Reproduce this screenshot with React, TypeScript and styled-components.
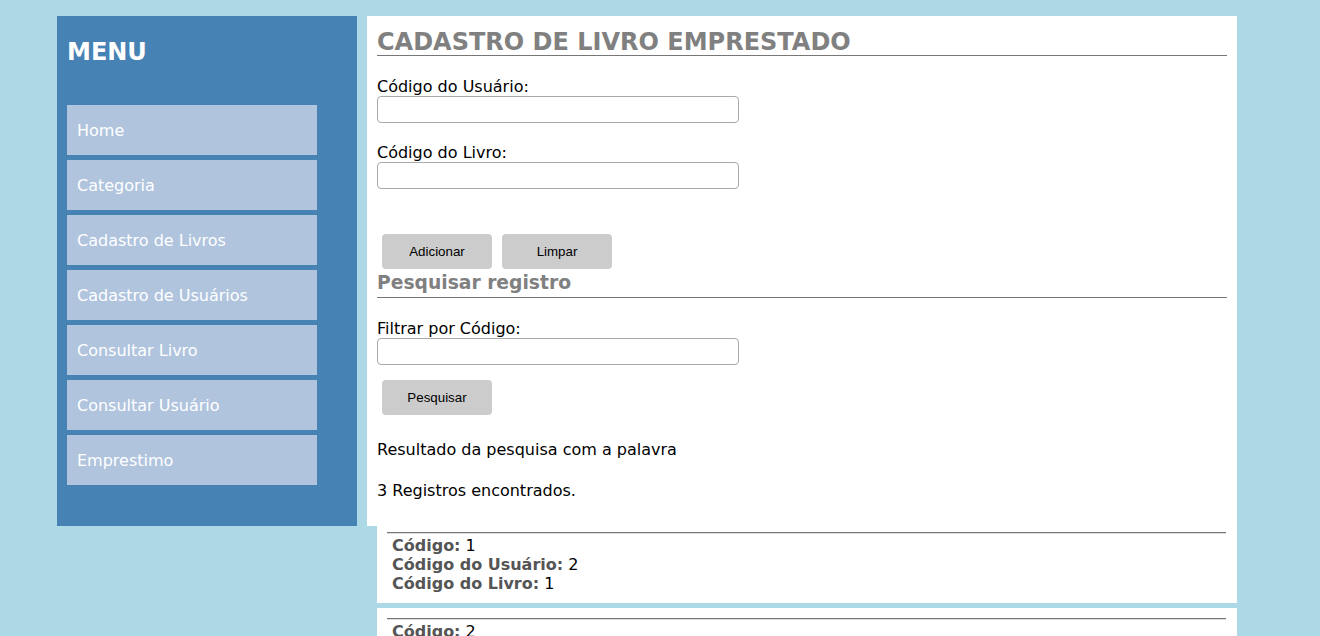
import React from "react";
import styled, { createGlobalStyle } from "styled-components";

const GlobalStyle = createGlobalStyle`
  html, body {
    margin: 0;
    padding: 0;
    background: #add8e6;
  }
  body {
    font-family: "DejaVu Sans", Verdana, sans-serif;
    font-size: 16px;
    color: #000;
  }
`;

const Page = styled.div`
  display: flex;
  align-items: flex-start;
  gap: 10px;
  padding: 16px 0 0 57px;
`;

const Sidebar = styled.nav`
  width: 300px;
  height: 510px;
  box-sizing: border-box;
  padding: 0 10px;
  background: #4682b4;
`;

const MenuTitle = styled.h2`
  margin: 22px 0 0;
  font-size: 24px;
  line-height: 28px;
  font-weight: bold;
  color: #fff;
`;

const MenuList = styled.ul`
  list-style: none;
  margin: 39px 0 0;
  padding: 0;
  display: flex;
  flex-direction: column;
  gap: 5px;
`;

const MenuItem = styled.li`
  width: 250px;
  height: 50px;
  box-sizing: border-box;
  padding: 1px 0 0 10px;
  display: flex;
  align-items: center;
  background: #b0c4de;
  color: #fff;
  font-size: 16px;
`;

const Column = styled.div`
  width: 870px;
  display: flex;
  flex-direction: column;
`;

const Panel = styled.main`
  height: 510px;
  box-sizing: border-box;
  padding: 0 10px;
  background: #fff;
`;

const Title = styled.h2`
  margin: 13px 0 0;
  font-size: 24px;
  line-height: 26px;
  font-weight: bold;
  color: #808080;
  border-bottom: 1px solid #777;
`;

const SubTitle = styled.h3`
  margin: 3px 0 0;
  padding-bottom: 3px;
  font-size: 18.72px;
  line-height: 22px;
  font-weight: bold;
  color: #808080;
  border-bottom: 1px solid #777;
`;

const Field = styled.div<{ $top: number }>`
  margin-top: ${(p) => p.$top}px;
`;

const Label = styled.label`
  display: block;
  line-height: 19px;
  height: 19px;
`;

const TextInput = styled.input`
  display: block;
  width: 362px;
  height: 27px;
  box-sizing: border-box;
  margin: 0;
  padding: 2px 5px;
  border: 1px solid #a9a9a9;
  border-radius: 4px;
  font-size: 14px;
  background: #fff;

  &:focus {
    outline: none;
  }
`;

const ButtonRow = styled.div<{ $top: number }>`
  display: flex;
  gap: 10px;
  padding-left: 5px;
  margin-top: ${(p) => p.$top}px;
`;

const Button = styled.button`
  width: 110px;
  height: 35px;
  margin: 0;
  border: none;
  border-radius: 4px;
  background: #ccc;
  color: #000;
  font-family: "Liberation Sans", Arial, sans-serif;
  font-size: 13.33px;
`;

const Text = styled.p<{ $top: number }>`
  margin: ${(p) => p.$top}px 0 0;
  line-height: 19px;
`;

const Results = styled.div`
  margin: -4px 0 0 10px;
  display: flex;
  flex-direction: column;
  gap: 5px;
`;

const Card = styled.div`
  background: #fff;
  padding: 10px 11px 10px 10px;
`;

const Rule = styled.hr`
  margin: 0 0 2px;
  height: 0;
  border: none;
  border-top: 1px solid #777;
  border-bottom: 1px solid #ddd;
`;

const Line = styled.div`
  padding-left: 5px;
  line-height: 19px;
`;

const Key = styled.b`
  color: #555;
`;

const menu = [
  "Home",
  "Categoria",
  "Cadastro de Livros",
  "Cadastro de Usuários",
  "Consultar Livro",
  "Consultar Usuário",
  "Emprestimo",
];

const records = [
  { id: 1, user: 2, book: 1 },
  { id: 2, user: 1, book: 3 },
  { id: 3, user: 3, book: 2 },
];

export default function App() {
  return (
    <>
      <GlobalStyle />
      <Page>
        <Sidebar>
          <MenuTitle>MENU</MenuTitle>
          <MenuList>
            {menu.map((m) => (
              <MenuItem key={m}>{m}</MenuItem>
            ))}
          </MenuList>
        </Sidebar>
        <Column>
          <Panel>
            <Title>CADASTRO DE LIVRO EMPRESTADO</Title>
            <Field $top={21}>
              <Label>Código do Usuário:</Label>
              <TextInput type="text" />
            </Field>
            <Field $top={20}>
              <Label>Código do Livro:</Label>
              <TextInput type="text" />
            </Field>
            <ButtonRow $top={45}>
              <Button>Adicionar</Button>
              <Button>Limpar</Button>
            </ButtonRow>
            <SubTitle>Pesquisar registro</SubTitle>
            <Field $top={21}>
              <Label>Filtrar por Código:</Label>
              <TextInput type="text" autoFocus />
            </Field>
            <ButtonRow $top={15}>
              <Button>Pesquisar</Button>
            </ButtonRow>
            <Text $top={25}>Resultado da pesquisa com a palavra</Text>
            <Text $top={22}>3 Registros encontrados.</Text>
          </Panel>
          <Results>
            {records.map((r) => (
              <Card key={r.id}>
                <Rule />
                <Line>
                  <Key>Código:</Key> {r.id}
                </Line>
                <Line>
                  <Key>Código do Usuário:</Key> {r.user}
                </Line>
                <Line>
                  <Key>Código do Livro:</Key> {r.book}
                </Line>
              </Card>
            ))}
          </Results>
        </Column>
      </Page>
    </>
  );
}
